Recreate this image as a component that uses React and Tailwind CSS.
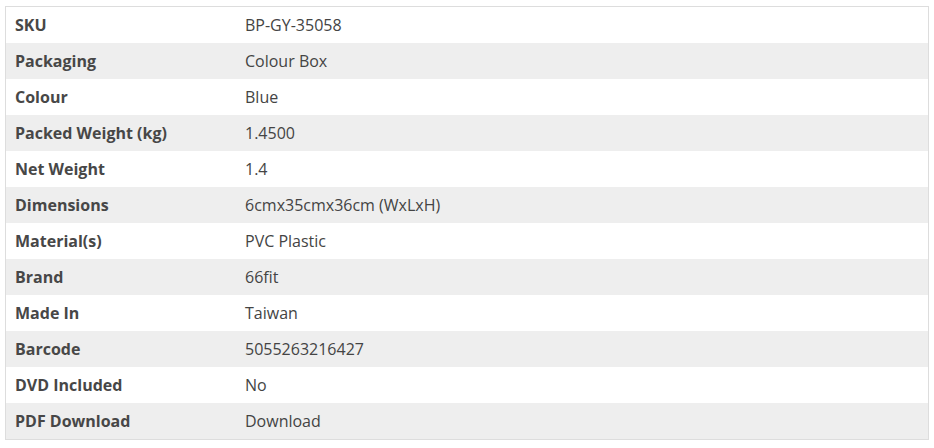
export default function App() {
  const rows = [
    ["SKU", "BP-GY-35058"],
    ["Packaging", "Colour Box"],
    ["Colour", "Blue"],
    ["Packed Weight (kg)", "1.4500"],
    ["Net Weight", "1.4"],
    ["Dimensions", "6cmx35cmx36cm (WxLxH)"],
    ["Material(s)", "PVC Plastic"],
    ["Brand", "66fit"],
    ["Made In", "Taiwan"],
    ["Barcode", "5055263216427"],
    ["DVD Included", "No"],
    ["PDF Download", "Download"],
  ];
  return (
    <div className="w-[934px] h-[448px] bg-white pt-[6px] pl-[5px]" style={{ fontFamily: '"Open Sans", sans-serif' }}>
      <div className="w-[924px] border border-[#dddddd]">
        {rows.map(([k, v], i) => (
          <div key={k} className={`flex h-[36px] items-center text-[16px] ${i % 2 === 1 ? "bg-[#eeeeee]" : "bg-white"}`}>
            <div className="w-[230px] pl-[9px] font-bold text-[#474747]">{k}</div>
            <div className="pl-[9px] text-[#444444]">{v}</div>
          </div>
        ))}
      </div>
    </div>
  );
}
